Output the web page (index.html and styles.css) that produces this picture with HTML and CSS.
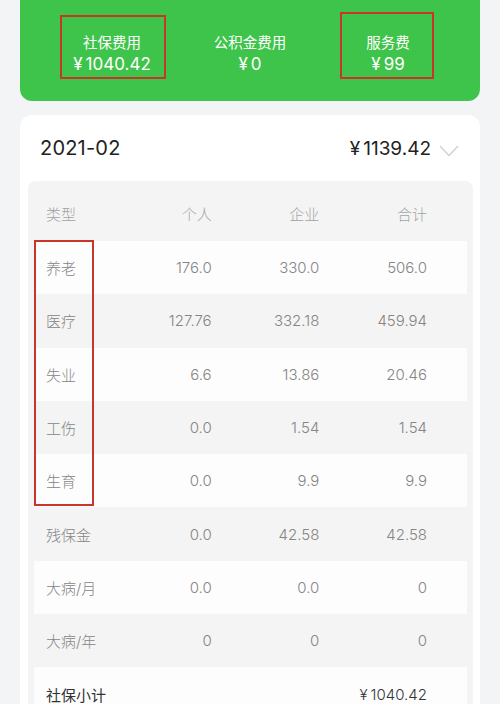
FILE: index.html
```html
<!DOCTYPE html>
<html lang="zh">
<head>
<meta charset="utf-8">
<link rel="stylesheet" href="styles.css">
</head>
<body>
<div class="summary">
  <div class="stat">
    <span class="mark mark-a"></span>
    <div class="stat-label">社保费用</div>
    <div class="stat-value"><span class="yen">¥</span>1040.42</div>
  </div>
  <div class="stat">
    <div class="stat-label">公积金费用</div>
    <div class="stat-value"><span class="yen">¥</span>0</div>
  </div>
  <div class="stat">
    <span class="mark mark-b"></span>
    <div class="stat-label">服务费</div>
    <div class="stat-value"><span class="yen">¥</span>99</div>
  </div>
</div>

<div class="card">
  <div class="card-head">
    <div class="month">2021-02</div>
    <div class="total">
      <span class="total-amount"><span class="yen">¥</span>1139.42</span>
      <svg class="chevron" width="20" height="12" viewBox="0 0 20 12"><path d="M1 1 L10 10.5 L19 1" fill="none" stroke="#cfcfcf" stroke-width="1.3"/></svg>
    </div>
  </div>
  <div class="table">
    <span class="mark mark-c"></span>
    <div class="row head"><span>类型</span><span>个人</span><span>企业</span><span>合计</span></div>
    <div class="row light"><span>养老</span><span>176.0</span><span>330.0</span><span>506.0</span></div>
    <div class="row"><span>医疗</span><span>127.76</span><span>332.18</span><span>459.94</span></div>
    <div class="row light"><span>失业</span><span>6.6</span><span>13.86</span><span>20.46</span></div>
    <div class="row"><span>工伤</span><span>0.0</span><span>1.54</span><span>1.54</span></div>
    <div class="row light"><span>生育</span><span>0.0</span><span>9.9</span><span>9.9</span></div>
    <div class="row"><span>残保金</span><span>0.0</span><span>42.58</span><span>42.58</span></div>
    <div class="row light"><span>大病/月</span><span>0.0</span><span>0.0</span><span>0</span></div>
    <div class="row"><span>大病/年</span><span>0</span><span>0</span><span>0</span></div>
    <div class="row light sub"><span class="sub-label">社保小计</span><span></span><span></span><span><span class="yen">¥</span>1040.42</span></div>
  </div>
</div>
</body>
</html>
```

FILE: styles.css
```css
html, body {
  margin: 0;
  padding: 0;
}
body {
  background: #f3f4f6;
  font-family: Inter, "Noto Sans CJK SC", sans-serif;
  width: 500px;
  height: 704px;
  overflow: hidden;
}
.yen {
  margin-right: 3px;
}
.summary {
  margin: 0 20px;
  height: 101px;
  box-sizing: border-box;
  padding: 33px 23px 0;
  background: #3fc44b;
  border-radius: 0 0 12px 12px;
  display: flex;
  color: #fff;
}
.stat {
  flex: 1;
  position: relative;
  display: flex;
  flex-direction: column;
  align-items: center;
}
.stat-label {
  font-size: 14.5px;
  line-height: 20px;
}
.stat-value {
  font-size: 17px;
  line-height: 22px;
}
.mark {
  position: absolute;
  border: 2px solid #c8352a;
  box-sizing: border-box;
  pointer-events: none;
}
.mark-a {
  left: 17px;
  top: -18px;
  width: 106px;
  height: 64px;
}
.mark-b {
  left: 21px;
  top: -21px;
  width: 94px;
  height: 67px;
}
.card {
  margin: 14px 20px 0;
  background: #fff;
  border-radius: 12px;
  padding: 0 7px 0 8px;
}
.card-head {
  height: 66px;
  display: flex;
  align-items: center;
  justify-content: space-between;
  padding: 0 14px 0 12px;
}
.month {
  font-size: 20px;
  color: #222;
  letter-spacing: 0.2px;
}
.total {
  display: flex;
  align-items: center;
  gap: 8px;
}
.total-amount {
  font-size: 19px;
  color: #222;
}
.chevron {
  margin-top: 6px;
}
.table {
  position: relative;
  background: #f4f4f4;
  border-radius: 8px 8px 0 0;
  padding: 0 6px;
}
.row {
  display: grid;
  grid-template-columns: 58px repeat(3, 1fr);
  align-items: center;
  box-sizing: border-box;
  height: 53.3px;
  padding: 0 40px 0 12px;
  font-size: 15px;
  font-weight: 300;
  color: #858585;
}
.row span + span {
  text-align: right;
}
.row.head {
  height: 60px;
  padding-top: 4px;
  color: #a3a3a3;
}
.row.light {
  background: #fdfdfd;
}
.sub-label,
.sub span:last-child {
  color: #333;
}
.sub-label {
  font-weight: 400;
  white-space: nowrap;
}
.mark-c {
  left: 6px;
  top: 59px;
  width: 60px;
  height: 266px;
}
```
